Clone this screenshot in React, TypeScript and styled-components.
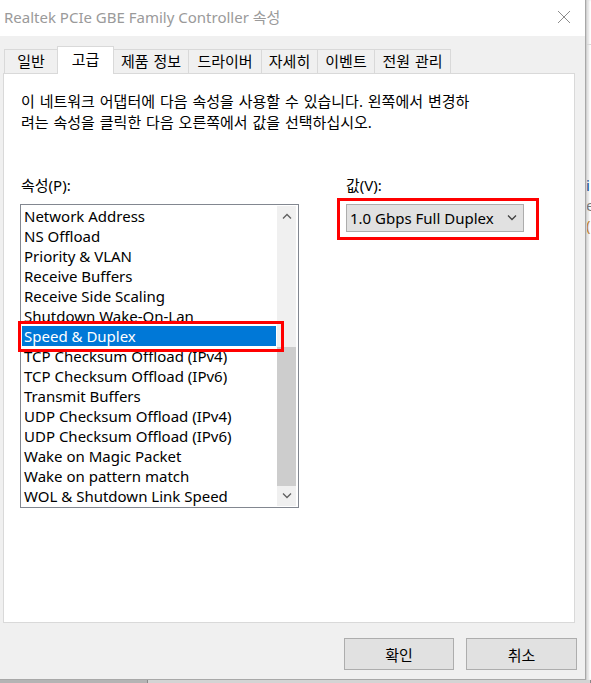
import React from "react";
import styled, { createGlobalStyle } from "styled-components";

const uiFont = `"Segoe UI", "Noto Sans", "Noto Sans CJK KR", sans-serif`;

const GlobalStyle = createGlobalStyle`
  html, body {
    margin: 0;
    padding: 0;
    background: #e6e6e6;
  }
  body {
    font-family: ${uiFont};
    font-size: 15px;
    color: #000;
  }
`;

const Screen = styled.div`
  width: 591px;
  height: 683px;
  overflow: hidden;
  display: flex;
  flex-direction: column;
`;

const TopArea = styled.div`
  display: flex;
  height: 680px;
`;

const Dialog = styled.div`
  width: 586px;
  flex: none;
  background: #f0f0f0;
  border-right: 1px solid #a8a8a8;
  border-bottom: 1px solid #a8a8a8;
  box-sizing: border-box;
  display: flex;
  flex-direction: column;
`;

const TitleBar = styled.div`
  height: 36px;
  background: #fff;
  display: flex;
  align-items: center;
  justify-content: space-between;
  padding: 0 14px 0 4px;
`;

const Title = styled.div`
  color: #9a9a9a;
  font-size: 15px;
  line-height: 20px;
  margin-top: -3px;
`;

const CloseButton = styled.div`
  width: 14px;
  height: 14px;
  display: flex;
  margin-top: -2px;
`;

const Body = styled.div`
  padding: 10px 0 0 3px;
  display: flex;
  flex-direction: column;
`;

const TabRow = styled.div`
  display: flex;
  align-items: flex-end;
  height: 27px;
  padding-left: 2px;
`;

const Tab = styled.div<{ $w: number; $active?: boolean }>`
  width: ${(p) => p.$w}px;
  height: ${(p) => (p.$active ? 28 : 24)}px;
  margin-left: -1px;
  margin-bottom: ${(p) => (p.$active ? -1 : 0)}px;
  box-sizing: border-box;
  border: 1px solid #d9d9d9;
  border-bottom: none;
  background: ${(p) => (p.$active ? "#fff" : "#f0f0f0")};
  position: relative;
  z-index: ${(p) => (p.$active ? 1 : 0)};
  display: flex;
  align-items: center;
  justify-content: center;
  font-size: 15px;
  line-height: 20px;
  word-spacing: 1px;
  padding-bottom: ${(p) => (p.$active ? 3 : 1)}px;
`;

const Panel = styled.div`
  width: 572px;
  height: 550px;
  box-sizing: border-box;
  background: #fff;
  border: 1px solid #d9d9d9;
  padding: 17px 0 0 16px;
`;

const Description = styled.p`
  margin: 0 0 42px 1px;
  font-size: 15px;
  line-height: 21px;
  word-spacing: 1px;
  width: 520px;
`;

const Columns = styled.div`
  display: flex;
  gap: 46px;
`;

const Column = styled.div`
  display: flex;
  flex-direction: column;
`;

const FieldLabel = styled.div`
  font-size: 15px;
  line-height: 20px;
  margin: 0 0 9px 1px;
`;

const ListWrap = styled.div`
  position: relative;
`;

const ListBox = styled.div`
  width: 279px;
  height: 304px;
  box-sizing: border-box;
  border: 1px solid #828790;
  padding: 1px;
  display: flex;
  background: #fff;
`;

const Items = styled.div`
  flex: 1;
  display: flex;
  flex-direction: column;
  overflow: hidden;
`;

const Item = styled.div<{ $selected?: boolean }>`
  height: 20px;
  line-height: 21px;
  padding-left: 2px;
  margin-right: 1px;
  white-space: nowrap;
  font-size: 15px;
  background: ${(p) => (p.$selected ? "#0078d7" : "transparent")};
  color: ${(p) => (p.$selected ? "#fff" : "#000")};
`;

const ScrollBar = styled.div`
  width: 19px;
  margin-right: 1px;
  background: #f0f0f0;
  display: flex;
  flex-direction: column;
`;

const ScrollArrow = styled.div`
  height: 20px;
  display: flex;
  align-items: center;
  justify-content: center;
`;

const ScrollTrack = styled.div`
  flex: 1;
  display: flex;
  flex-direction: column;
`;

const Thumb = styled.div<{ $top: number; $size: number }>`
  margin-top: ${(p) => p.$top}px;
  height: ${(p) => p.$size}px;
  background: #cdcdcd;
`;

const Highlight = styled.div<{ $l: number; $t: number; $w: number; $h: number }>`
  position: absolute;
  left: ${(p) => p.$l}px;
  top: ${(p) => p.$t}px;
  width: ${(p) => p.$w}px;
  height: ${(p) => p.$h}px;
  box-sizing: border-box;
  border: 3px solid #ff0000;
  pointer-events: none;
`;

const ComboWrap = styled.div`
  position: relative;
  margin-left: 1px;
`;

const Combo = styled.div`
  width: 178px;
  height: 28px;
  box-sizing: border-box;
  background: #e1e1e1;
  border: 1px solid #adadad;
  display: flex;
  align-items: center;
  justify-content: space-between;
  padding: 0 6px 0 3px;
  font-size: 15px;
`;

const Footer = styled.div`
  display: flex;
  justify-content: flex-end;
  gap: 12px;
  padding: 15px 8px 0 0;
`;

const Button = styled.div<{ $w: number }>`
  width: ${(p) => p.$w}px;
  height: 32px;
  box-sizing: border-box;
  background: #e1e1e1;
  border: 1px solid #adadad;
  display: flex;
  align-items: center;
  justify-content: center;
  font-size: 15px;
`;

const BackWindow = styled.div`
  flex: 1;
  background: #fff;
  border-left: 1px solid #d0d0d0;
  box-shadow: inset 2px 0 2px rgba(0, 0, 0, 0.12);
  overflow: hidden;
  display: flex;
  flex-direction: column;
  padding-top: 44px;
`;

const BackTopLine = styled.div`
  height: 1px;
  background: #d8d8d8;
  margin-bottom: 130px;
`;

const BackText = styled.div<{ $c: string }>`
  font-size: 15px;
  line-height: 20px;
  color: ${(p) => p.$c};
  white-space: nowrap;
  margin-left: -1px;
`;

const BottomStrip = styled.div`
  flex: 1;
  display: flex;
`;

const StripPart = styled.div<{ $w?: number; $c: string }>`
  width: ${(p) => (p.$w ? `${p.$w}px` : "auto")};
  flex: ${(p) => (p.$w ? "none" : "1")};
  background: ${(p) => p.$c};
  border-right: 1px solid #8a8a8a;
`;

const tabs = [
  { label: "일반", w: 54 },
  { label: "고급", w: 57, active: true },
  { label: "제품 정보", w: 76 },
  { label: "드라이버", w: 74 },
  { label: "자세히", w: 57 },
  { label: "이벤트", w: 58 },
  { label: "전원 관리", w: 77 },
];

const properties = [
  "Network Address",
  "NS Offload",
  "Priority & VLAN",
  "Receive Buffers",
  "Receive Side Scaling",
  "Shutdown Wake-On-Lan",
  "Speed & Duplex",
  "TCP Checksum Offload (IPv4)",
  "TCP Checksum Offload (IPv6)",
  "Transmit Buffers",
  "UDP Checksum Offload (IPv4)",
  "UDP Checksum Offload (IPv6)",
  "Wake on Magic Packet",
  "Wake on pattern match",
  "WOL & Shutdown Link Speed",
];

const Chevron = ({ up, color = "#606060" }: { up?: boolean; color?: string }) => (
  <svg width="10" height="6" viewBox="0 0 10 6">
    <path
      d={up ? "M1 5.5 L5 1.5 L9 5.5" : "M1 0.5 L5 4.5 L9 0.5"}
      fill="none"
      stroke={color}
      strokeWidth="1.3"
    />
  </svg>
);

const App: React.FC = () => {
  const selected = "Speed & Duplex";

  return (
    <>
      <GlobalStyle />
      <Screen>
        <TopArea>
          <Dialog>
            <TitleBar>
              <Title>Realtek PCIe GBE Family Controller 속성</Title>
              <CloseButton>
                <svg width="14" height="14" viewBox="0 0 14 14">
                  <path d="M1 1 L13 13 M13 1 L1 13" stroke="#8c8c8c" strokeWidth="1" fill="none" />
                </svg>
              </CloseButton>
            </TitleBar>
            <Body>
              <TabRow>
                {tabs.map((t) => (
                  <Tab key={t.label} $w={t.w} $active={t.active}>
                    {t.label}
                  </Tab>
                ))}
              </TabRow>
              <Panel>
                <Description>
                  이 네트워크 어댑터에 다음 속성을 사용할 수 있습니다. 왼쪽에서 변경하
                  <br />
                  려는 속성을 클릭한 다음 오른쪽에서 값을 선택하십시오.
                </Description>
                <Columns>
                  <Column>
                    <FieldLabel>속성(P):</FieldLabel>
                    <ListWrap>
                      <ListBox>
                        <Items>
                          {properties.map((p) => (
                            <Item key={p} $selected={p === selected}>
                              {p}
                            </Item>
                          ))}
                        </Items>
                        <ScrollBar>
                          <ScrollArrow>
                            <Chevron up />
                          </ScrollArrow>
                          <ScrollTrack>
                            <Thumb $top={121} $size={139} />
                          </ScrollTrack>
                          <ScrollArrow>
                            <Chevron />
                          </ScrollArrow>
                        </ScrollBar>
                      </ListBox>
                      <Highlight $l={-2} $t={117} $w={266} $h={31} />
                    </ListWrap>
                  </Column>
                  <Column>
                    <FieldLabel>값(V):</FieldLabel>
                    <ComboWrap>
                      <Combo>
                        <span>1.0 Gbps Full Duplex</span>
                        <Chevron color="#404040" />
                      </Combo>
                      <Highlight $l={-9} $t={-6} $w={202} $h={42} />
                    </ComboWrap>
                  </Column>
                </Columns>
              </Panel>
              <Footer>
                <Button $w={110}>확인</Button>
                <Button $w={111}>취소</Button>
              </Footer>
            </Body>
          </Dialog>
          <BackWindow>
            <BackTopLine />
            <BackText $c="#1a4d8c">i</BackText>
            <BackText $c="#777">e</BackText>
            <BackText $c="#c08030">(</BackText>
          </BackWindow>
        </TopArea>
        <BottomStrip>
          <StripPart $w={147} $c="#b4b4b4" />
          <StripPart $c="#d4d4d4" />
        </BottomStrip>
      </Screen>
    </>
  );
};

export default App;
